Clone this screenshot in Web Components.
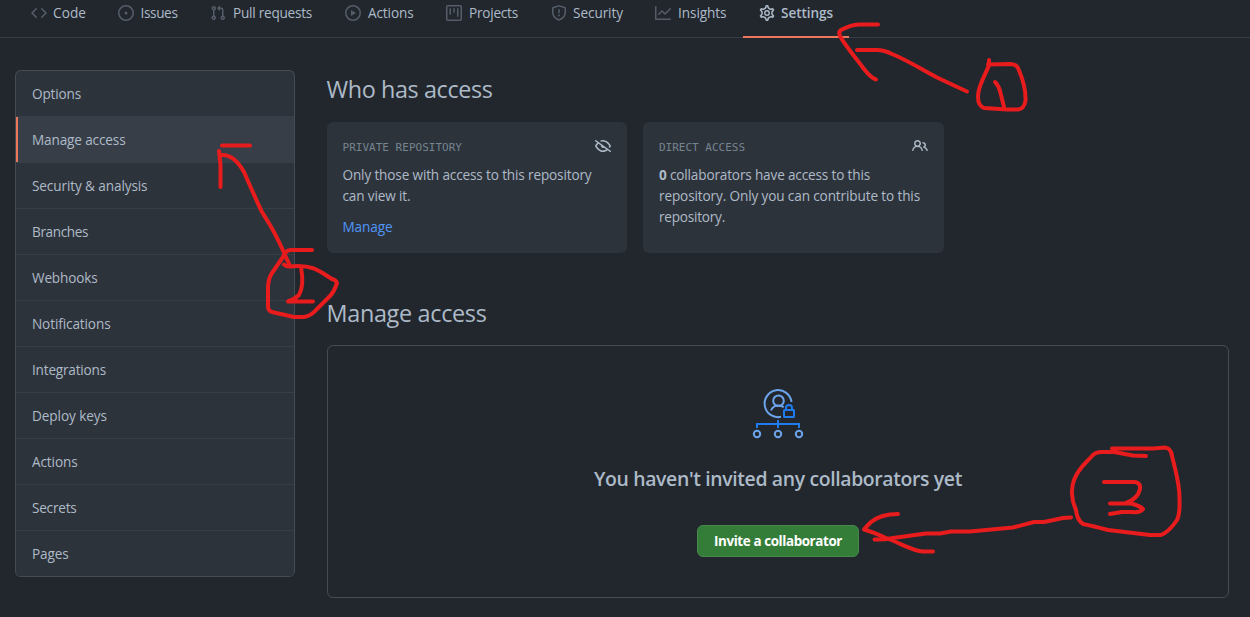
<!DOCTYPE html>
<html lang="en">
<head>
<meta charset="utf-8">
<title>Manage access</title>
<style>
html,body{margin:0;height:100%;overflow:hidden;background:#22272e}
body{font:13.6px/21px "Open Sans","Noto Sans",sans-serif;color:#adbac7}
</style>
</head>
<body>
<settings-page></settings-page>
<script>
const ICONS = {
code:'<path d="M4.72 3.22a.75.75 0 011.06 1.06L2.06 8l3.72 3.72a.75.75 0 11-1.06 1.06L.47 8.53a.75.75 0 010-1.06l4.25-4.25zm6.56 0a.75.75 0 10-1.06 1.06L13.94 8l-3.72 3.72a.75.75 0 101.06 1.06l4.25-4.25a.75.75 0 000-1.06l-4.25-4.25z"/>',
issue:'<path d="M8 9.5a1.5 1.5 0 100-3 1.5 1.5 0 000 3z"/><path d="M8 0a8 8 0 100 16A8 8 0 008 0zM1.5 8a6.5 6.5 0 1113 0 6.5 6.5 0 01-13 0z"/>',
pull:'<path d="M7.177 3.073L9.573.677A.25.25 0 0110 .854v4.792a.25.25 0 01-.427.177L7.177 3.427a.25.25 0 010-.354zM3.75 2.5a.75.75 0 100 1.5.75.75 0 000-1.5zm-2.25.75a2.25 2.25 0 113 2.122v5.256a2.251 2.251 0 11-1.5 0V5.372A2.25 2.25 0 011.5 3.25zM11 2.5h-1V4h1a1 1 0 011 1v5.628a2.251 2.251 0 101.5 0V5A2.5 2.5 0 0011 2.5zm1 10.25a.75.75 0 111.5 0 .75.75 0 01-1.5 0zM3.75 12a.75.75 0 100 1.5.75.75 0 000-1.5z"/>',
play:'<path d="M1.5 8a6.5 6.5 0 1113 0 6.5 6.5 0 01-13 0zM8 0a8 8 0 100 16A8 8 0 008 0zM6.379 5.227A.25.25 0 006 5.442v5.117a.25.25 0 00.379.214l4.264-2.559a.25.25 0 000-.428L6.379 5.227z"/>',
project:'<path d="M1.75 0A1.75 1.75 0 000 1.75v12.5C0 15.216.784 16 1.75 16h12.5A1.75 1.75 0 0016 14.25V1.75A1.75 1.75 0 0014.25 0H1.75zM1.5 1.75a.25.25 0 01.25-.25h12.5a.25.25 0 01.25.25v12.5a.25.25 0 01-.25.25H1.75a.25.25 0 01-.25-.25V1.75zM11.75 3a.75.75 0 00-.75.75v7.5a.75.75 0 001.5 0v-7.5a.75.75 0 00-.75-.75zm-8.25.75a.75.75 0 011.5 0v5.5a.75.75 0 01-1.5 0v-5.5zM8 3a.75.75 0 00-.75.75v3.5a.75.75 0 001.5 0v-3.5A.75.75 0 008 3z"/>',
shield:'<path d="M7.467.133a1.75 1.75 0 011.066 0l5.25 1.68A1.75 1.75 0 0115 3.48V7c0 1.566-.32 3.182-1.303 4.682-.983 1.498-2.585 2.813-5.032 3.855a1.7 1.7 0 01-1.33 0c-2.447-1.042-4.049-2.357-5.032-3.855C1.32 10.182 1 8.566 1 7V3.48a1.75 1.75 0 011.217-1.667l5.25-1.68zm.61 1.429a.25.25 0 00-.153 0l-5.25 1.68a.25.25 0 00-.174.238V7c0 1.358.275 2.666 1.057 3.86.784 1.194 2.121 2.34 4.366 3.297a.2.2 0 00.154 0c2.245-.956 3.582-2.104 4.366-3.298C13.225 9.666 13.5 8.36 13.5 7V3.48a.25.25 0 00-.174-.237l-5.25-1.68zM9 10.5a1 1 0 11-2 0 1 1 0 012 0zm-.25-5.75a.75.75 0 10-1.5 0v3a.75.75 0 001.5 0v-3z"/>',
graph:'<path d="M1.5 1.75a.75.75 0 00-1.5 0v12.5c0 .414.336.75.75.75h14.5a.75.75 0 000-1.5H1.5V1.75zm14.28 2.53a.75.75 0 00-1.06-1.06L10 7.94 7.53 5.47a.75.75 0 00-1.06 0L3.22 8.72a.75.75 0 001.06 1.06L7 7.06l2.47 2.47a.75.75 0 001.06 0l5.25-5.25z"/>',
gear:'<g fill="none" stroke="currentColor" stroke-width="1.4"><path transform="translate(8 8) scale(1.1) translate(-8 -8)" d="M7.429 1.525a6.593 6.593 0 011.142 0c.036.003.108.036.137.146l.289 1.105c.147.56.55.967.997 1.189.174.086.341.183.501.29.417.278.97.423 1.53.27l1.102-.303c.11-.03.175.016.195.046.219.31.41.641.573.989.014.031.022.11-.059.19l-.815.806c-.411.406-.562.957-.53 1.456a4.588 4.588 0 010 .582c-.032.499.119 1.05.53 1.456l.815.806c.08.08.073.159.059.19a6.494 6.494 0 01-.573.99c-.02.029-.086.074-.195.045l-1.103-.303c-.559-.153-1.112-.008-1.529.27-.16.107-.327.204-.5.29-.449.222-.851.628-.998 1.189l-.289 1.105c-.029.11-.101.143-.137.146a6.613 6.613 0 01-1.142 0c-.036-.003-.108-.037-.137-.146l-.289-1.105c-.147-.56-.55-.967-.997-1.189a4.502 4.502 0 01-.501-.29c-.417-.278-.97-.423-1.53-.27l-1.102.303c-.11.03-.175-.016-.195-.046a6.492 6.492 0 01-.573-.989c-.014-.031-.022-.11.059-.19l.815-.806c.411-.406.562-.957.53-1.456a4.587 4.587 0 010-.582c.032-.499-.119-1.05-.53-1.456l-.815-.806c-.08-.08-.073-.159-.059-.19a6.44 6.44 0 01.573-.99c.02-.029.086-.075.195-.045l1.103.303c.559.153 1.112.008 1.529-.27.16-.107.327-.204.5-.29.449-.222.851-.628.998-1.189l.289-1.105c.029-.11.101-.143.137-.146z"/><circle cx="8" cy="8" r="2.25"/></g>',
eye:'<path d="M.143 2.31a.75.75 0 011.047-.167l14.5 10.5a.75.75 0 11-.88 1.214l-2.248-1.628C11.346 13.19 9.792 14 8 14c-1.981 0-3.67-.992-4.933-2.078C1.797 10.832.88 9.577.43 8.9a1.618 1.618 0 010-1.797c.353-.533.995-1.42 1.868-2.305L.31 3.357A.75.75 0 01.143 2.31zm3.386 3.378a14.21 14.21 0 00-1.85 2.244.12.12 0 00-.022.068c0 .021.006.045.022.068.412.621 1.242 1.75 2.366 2.717C5.175 11.758 6.527 12.5 8 12.5c1.195 0 2.31-.488 3.29-1.191L9.063 9.695A2 2 0 016.058 7.52l-2.53-1.832zM8 3.5c-.516 0-1.017.09-1.499.251a.75.75 0 11-.473-1.423A6.23 6.23 0 018 2c1.981 0 3.67.992 4.933 2.078 1.27 1.091 2.187 2.345 2.637 3.023a1.618 1.618 0 010 1.798c-.11.166-.248.365-.41.587a.75.75 0 11-1.21-.887c.148-.201.272-.382.371-.53a.119.119 0 000-.137c-.412-.621-1.242-1.75-2.366-2.717C10.825 4.242 9.473 3.5 8 3.5z"/>',
people:'<path d="M5.5 3.5a2 2 0 100 4 2 2 0 000-4zM2 5.5a3.5 3.5 0 115.898 2.549 5.507 5.507 0 013.034 4.084.75.75 0 11-1.482.235 4.001 4.001 0 00-7.9 0 .75.75 0 01-1.482-.236A5.507 5.507 0 013.102 8.05 3.49 3.49 0 012 5.5zM11 4a.75.75 0 100 1.5 1.5 1.5 0 01.666 2.844.75.75 0 00-.416.672v.352a.75.75 0 00.574.73c1.2.289 2.162 1.2 2.522 2.372a.75.75 0 101.434-.44 5.01 5.01 0 00-2.56-3.012A3 3 0 0011 4z"/>'
};

function define(name, render, after) {
  customElements.define(name, class extends HTMLElement {
    connectedCallback() {
      if (this.shadowRoot) return;
      this.attachShadow({mode: 'open'}).innerHTML = render(this);
      if (after) after(this);
    }
  });
}

define('oct-icon', el => `<style>:host{display:block;flex:none;width:16px;height:16px}svg{display:block}</style>
<svg width="16" height="16" viewBox="0 0 16 16" fill="currentColor" fill-rule="evenodd">${ICONS[el.getAttribute('name')]}</svg>`);

define('nav-tab', el => `<style>
:host{display:flex;box-sizing:border-box;flex:none;height:38px;padding:0 0 10px 16px;align-items:center;gap:6px;border-bottom:2px solid transparent}
:host([selected]){border-color:#ec775c;font-weight:600}
::slotted(fit-text){margin-bottom:2px}
oct-icon{color:#545d68}:host([selected]) oct-icon{color:#adbac7}
</style><oct-icon name="${el.getAttribute('icon')}"></oct-icon><slot></slot>`);

define('repo-nav', () => `<style>
:host{display:flex;box-sizing:border-box;height:38px;padding-left:15px;box-shadow:inset 0 -1px #373e47}
</style>
<nav-tab icon="code" style="width:87px"><fit-text w="33">Code</fit-text></nav-tab>
<nav-tab icon="issue" style="width:92px;gap:6.5px"><fit-text w="37">Issues</fit-text></nav-tab>
<nav-tab icon="pull" style="width:135px;gap:7px"><fit-text w="79">Pull requests</fit-text></nav-tab>
<nav-tab icon="play" style="width:101px;gap:7px"><fit-text w="45.500">Actions</fit-text></nav-tab>
<nav-tab icon="project" style="width:105px;gap:7px"><fit-text w="49">Projects</fit-text></nav-tab>
<nav-tab icon="shield" style="width:104px"><fit-text w="50">Security</fit-text></nav-tab>
<nav-tab icon="graph" style="width:104px;gap:7px"><fit-text w="48.500">Insights</fit-text></nav-tab>
<nav-tab icon="gear" selected style="width:106px"><fit-text w="52">Settings</fit-text></nav-tab>`);

define('menu-item', () => `<style>
:host{display:flex;box-sizing:border-box;height:46px;align-items:center;padding-left:16px;border-bottom:1px solid #373e47}
:host(:last-of-type){border-color:#444c56}
:host([selected]){background:#373e47;box-shadow:inset 2px 0 #ec775c}
</style><slot></slot>`);

define('side-menu', () => `<style>
:host{display:block;box-sizing:border-box;width:280px;height:507px;border:1px solid #444c56;border-bottom:0;border-radius:6px;overflow:hidden;background:#2d333b}
</style>` + [['Options',49],['Manage access',93.5],['Security &amp; analysis',115.5],['Branches',56],['Webhooks',65.5],['Notifications',78.5],['Integrations',74],['Deploy keys',75],['Actions',45.5],['Secrets',44.5],['Pages',36.5]]
  .map(([t, w], i) => `<menu-item${i === 1 ? ' selected' : ''}><fit-text w="${w}">${t}</fit-text></menu-item>`).join(''));

define('access-card', el => `<style>
:host{display:block;box-sizing:border-box;height:131px;padding:16px 16px 0 var(--inset,16px);border-radius:6px;background:#2d333b}
header{display:flex;justify-content:space-between;height:26px;font:11px/19px "DejaVu Sans Mono",monospace;color:#768390}
oct-icon{color:#adbac7}
</style><header><slot name="label"></slot><oct-icon name="${el.getAttribute('icon')}"></oct-icon></header><slot></slot>`);

define('invite-panel', () => `<style>
:host{display:flex;box-sizing:border-box;flex-direction:column;align-items:center;width:902px;height:253px;padding-top:42px;border:1px solid #444c56;border-radius:6px}
svg{display:block;margin-bottom:24px}
h3{margin:0;font-size:19.4px;line-height:30px;font-weight:600}
button{box-sizing:border-box;width:162px;height:32px;margin-top:31px;padding:0;border:1px solid #46894b;border-radius:6px;background:#347d39;color:#fff;font:700 13.4px/20px "Open Sans","Noto Sans",sans-serif}
</style>
<svg width="52" height="52" viewBox="0 0 52 52" fill="none" stroke-width="2">
<g stroke="#6ca4ec">
<path d="M39.500 14A13.500 13.500 0 1 0 29 28.800"/><circle cx="26.500" cy="12.700" r="5.300"/><path d="M19 22.500c1.300-3.500 3.800-5 7.500-5 2.300 0 4 .6 5.200 1.800"/>
<circle cx="5" cy="46" r="3.200"/><circle cx="26" cy="46" r="3.200"/><circle cx="47" cy="46" r="3.200"/></g>
<g stroke="#1f7bee"><rect x="32" y="22" width="10" height="7" rx=".5"/><path d="M34 22v-2a3 3 0 0 1 6 0v2M26 32v8M5 40v-4h42v4"/></g>
</svg>
<h3><fit-text w="368">You haven't invited any collaborators yet</fit-text></h3>
<button><fit-text w="128">Invite a collaborator</fit-text></button>`);

define('pen-notes', () => `<style>:host{position:absolute;inset:0;pointer-events:none}svg{display:block}</style>
<svg width="1250" height="617" fill="none" stroke="#e81c1c" stroke-width="4" stroke-linecap="round" stroke-linejoin="round">
<path d="M878 24.500H859Q850 25 841 30Q838 32 840 36C846 47 857 59 864 69Q871 78 876 79.500"/>
<path d="M857 50H877Q884 50 892 54C907 60 921 69 936 77L953 85L967 91.500"/>
<path d="M989 60V65C986 74 981 80 978.500 92C977 101 979 106 984 108L1007 109.500H1018Q1024 109 1025.500 101C1026 89 1022 77 1018 68Q1016 64 1010 64L988 64.500"/>
<path d="M995 82Q999 86 1000.500 93L1004 107"/>
<path d="M222 145.500H250M219 151L220.500 165V187M221 155Q234 154 244 172C249 183 255 198 262 212L270 225C278 238 284 253 290 266"/>
<path d="M312 250H292Q286 249 283 257L272 273Q268 279 268 288V306Q268 311 272 312L294 317H304Q311 316 317 309L330 296Q334 292 337 283Q336 280 332 279L321 272L314 268.500Q304 265 290 266.500Q287 267 284 264.500"/>
<path d="M301 267C303 278 303 288 299 295Q295 299 288 301.500H313"/>
<path d="M898 514Q881 514 871 522Q866 527 864 529.500Q873 532 886 538C902 544 913 551 923 551.500H933"/>
<path d="M874.500 539.500Q883 540 893 538L926 533.500H940L951 531.500H970L1013 527.500L1034 522H1044L1063 518L1071 517.500"/>
<path d="M1112 448.500H1153L1165 447.500Q1171 448 1172 456C1176 473 1180 484 1179.500 500Q1180 514 1177 520Q1169 532 1161 535H1150L1108 530Q1093 526 1083 524Q1077 520 1076 510C1071 500 1071 488 1074 480C1079 467 1087 462 1092 456Q1095 452 1102 452H1114L1133 455.500L1146 456"/>
<path d="M1104 482H1135Q1141 483 1140 489Q1138 499 1125 503.500M1110 503.500H1131Q1140 506 1143 509Q1140 513 1132 512H1122L1110 514"/>
</svg>`);

define('settings-page', () => `<style>
:host{display:block;position:relative;height:617px;overflow:hidden}
.body{display:grid;grid-template-columns:280px 902px;gap:32px;padding:32px 0 0 15px}
h2{margin:0 0 0 -.5px;font-weight:400;font-size:23.4px;line-height:36px}
.cards{display:grid;grid-template-columns:300px 301px;gap:16px;margin:15px 0 42px}
h2+invite-panel{margin-top:14px}
a{display:block;margin-top:10px;color:#5096f8;text-decoration:none}
p{margin:0}p fit-text{display:block}
main{padding-top:1px}
</style>
<repo-nav></repo-nav>
<div class="body"><side-menu></side-menu><main>
<h2><fit-text w="166">Who has access</fit-text></h2>
<div class="cards">
<access-card icon="eye" style="--inset:15.5px"><fit-text slot="label" w="119.500">PRIVATE REPOSITORY</fit-text>
<p><fit-text w="249">Only those with access to this repository</fit-text><fit-text w="68">can view it.</fit-text></p><a><fit-text w="50">Manage</fit-text></a></access-card>
<access-card icon="people"><fit-text slot="label" w="86">DIRECT ACCESS</fit-text>
<p><fit-text w="211"><b>0</b> collaborators have access to this</fit-text><fit-text w="261">repository. Only you can contribute to this</fit-text><fit-text w="66">repository.</fit-text></p></access-card>
</div>
<h2><fit-text w="160">Manage access</fit-text></h2>
<invite-panel></invite-panel>
</main></div>
<pen-notes></pen-notes>`);

/* Tracks its text so that the run fills the width given in "w". */
define('fit-text', () => `<style>:host{display:inline-block;white-space:nowrap}span{display:inline-block}</style><span><slot></slot></span>`, el => {
  const span = el.shadowRoot.querySelector('span');
  const extra = (+el.getAttribute('w') - span.getBoundingClientRect().width) / el.textContent.length;
  span.style.letterSpacing = extra.toFixed(3) + 'px';
});
</script>
</body>
</html>
